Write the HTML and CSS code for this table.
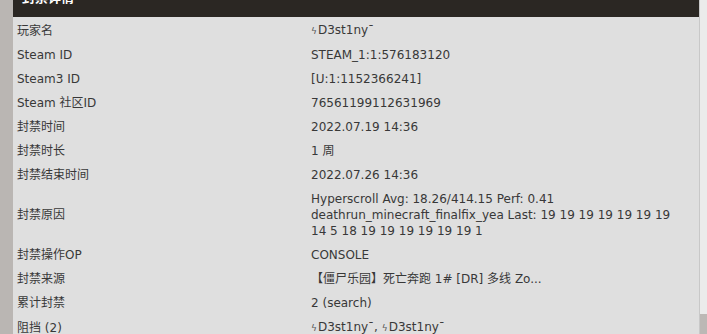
FILE: index.html
```html
<!DOCTYPE html>
<html>
<head>
    <meta charset="utf-8">
    <title>封禁详情</title>
    <link rel="stylesheet" href="styles.css">
</head>
<body>

    <div class="page">
        <div class="side"></div>

        <div class="panel">
            <div class="panel-title">封禁详情</div>
            <table class="details">
                <tr><td class="key">玩家名</td><td><span class="name-mark">ϟ</span>D3st1ny¯</td></tr>
                <tr><td class="key">Steam ID</td><td>STEAM_1:1:576183120</td></tr>
                <tr><td class="key">Steam3 ID</td><td>[U:1:1152366241]</td></tr>
                <tr><td class="key">Steam 社区ID</td><td>76561199112631969</td></tr>
                <tr><td class="key">封禁时间</td><td>2022.07.19 14:36</td></tr>
                <tr><td class="key">封禁时长</td><td>1 周</td></tr>
                <tr><td class="key">封禁结束时间</td><td>2022.07.26 14:36</td></tr>
                <tr><td class="key">封禁原因</td><td>Hyperscroll Avg: 18.26/414.15 Perf: 0.41 deathrun_minecraft_finalfix_yea Last: 19 19 19 19 19 19 19 14 5 18 19 19 19 19 19 19 1</td></tr>
                <tr><td class="key">封禁操作OP</td><td>CONSOLE</td></tr>
                <tr><td class="key">封禁来源</td><td>【僵尸乐园】死亡奔跑 1# [DR] 多线 Zo...</td></tr>
                <tr><td class="key">累计封禁</td><td>2 (search)</td></tr>
                <tr><td class="key">阻挡 (2)</td><td><span class="name-mark">ϟ</span>D3st1ny¯, <span class="name-mark">ϟ</span>D3st1ny¯</td></tr>
            </table>
        </div>

        <!-- fake scrollbar on the right -->
        <div class="scroll">
            <div class="thumb"></div>
        </div>
    </div>

</body>
</html>
```

FILE: styles.css
```css
body {
    margin: 0;
    padding: 0;
    background-color: #e0e0e0;
    font-family: "DejaVu Sans", "Noto Sans CJK SC", sans-serif;
    font-size: 12px;
    color: #383838;
    overflow: hidden;
}

.page {
    display: flex;
    height: 334px;
}

.side {
    width: 13px;
    background-color: #bab6b3;
}

/* panel is scrolled a bit, so the title bar is cut off at the top */
.panel {
    flex: 1;
    margin-top: -16px;
    background-color: #dfdfdf;
}

.panel-title {
    background-color: #2b2723;
    color: #fff;
    font-weight: bold;
    font-size: 13px;
    line-height: 20px;
    padding: 4px 9px 9px;
}

.details {
    width: 100%;
    border-collapse: collapse;
}

.details td {
    padding: 5px 20px 3px 4px;
    line-height: 16px;
    vertical-align: middle;
}

.details td.key {
    width: 270px;
}

/* small lightning in front of the nickname */
.name-mark {
    font-size: 9px;
    color: #555;
    margin-right: 1px;
}

.scroll {
    width: 7px;
    border-left: 1px solid #c8c8c8;
    background-color: #ebebeb;
    display: flex;
    flex-direction: column;
    justify-content: flex-end;
}

.thumb {
    height: 20px;
    background-color: #bcb8b5;
}
```
